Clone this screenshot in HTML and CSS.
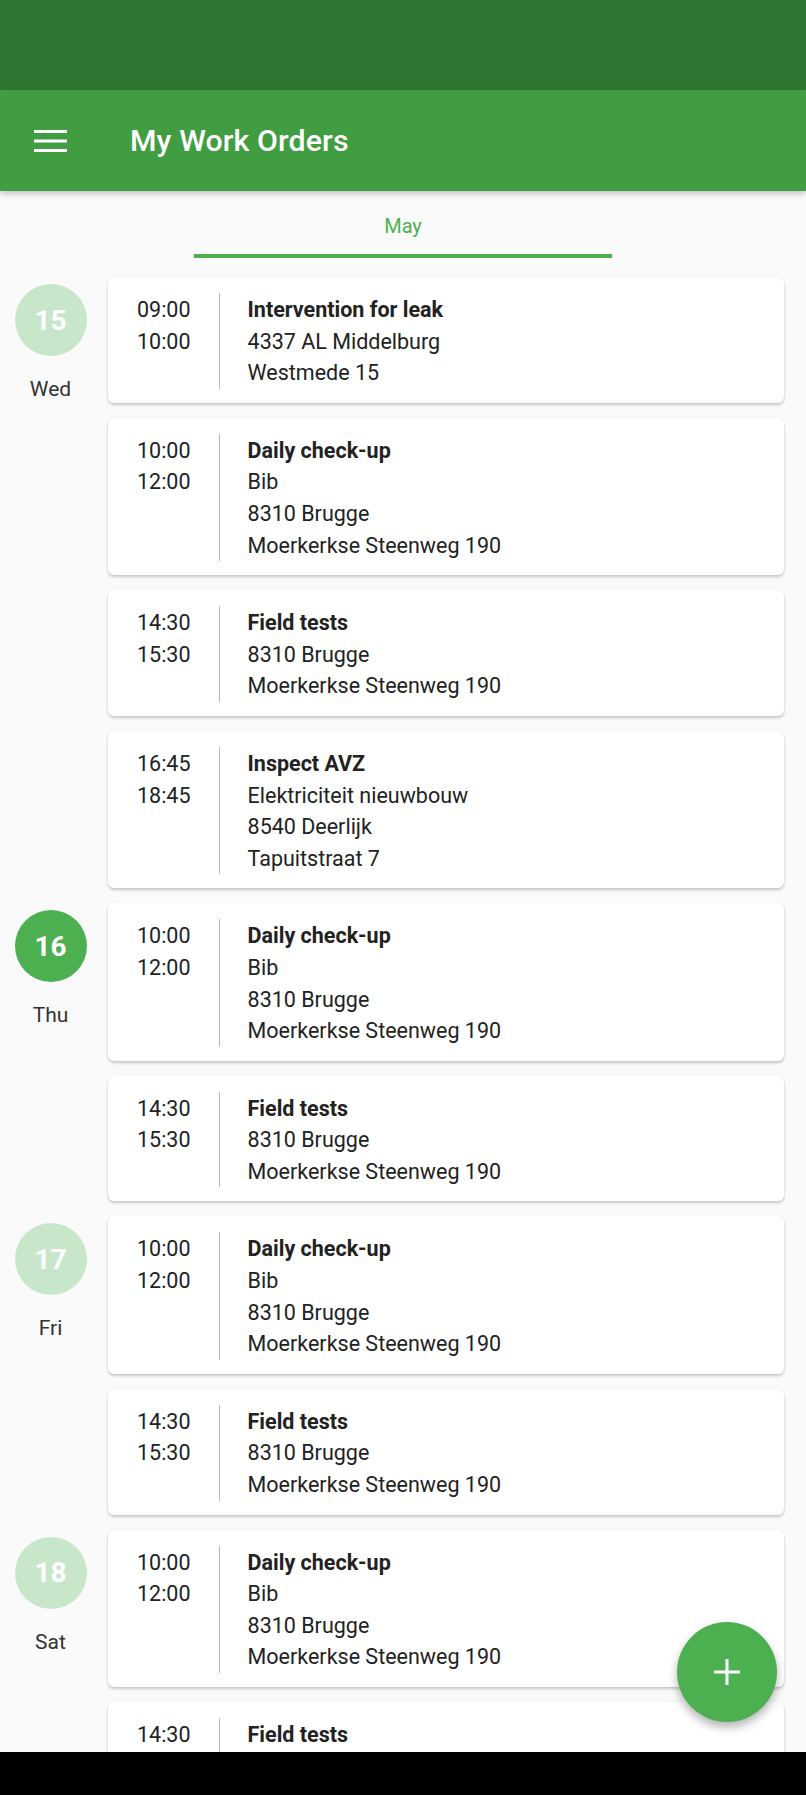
FILE: index.html
```html
<!DOCTYPE html>
<html lang="en">
<head>
<meta charset="utf-8">
<title>My Work Orders</title>
<link rel="stylesheet" href="styles.css">
</head>
<body>
<div class="screen">
  <div class="status"></div>
  <header class="appbar">
    <svg class="menu" width="33" height="22" viewBox="0 0 33 22">
      <rect x="0" y="0" width="33" height="3" fill="#fff"/>
      <rect x="0" y="9.5" width="33" height="3" fill="#fff"/>
      <rect x="0" y="19" width="33" height="3" fill="#fff"/>
    </svg>
    <h1 class="title">My Work Orders</h1>
  </header>
  <nav class="tabs">
    <div class="tab">May</div>
  </nav>
  <main class="list">
    <section class="day">
      <div class="date">
        <div class="circle light">15</div>
        <div class="weekday">Wed</div>
      </div>
      <div class="cards">
        <div class="card"><div class="time">09:00<br>10:00</div><div class="desc"><b>Intervention for leak</b><br>4337 AL Middelburg<br>Westmede 15</div></div>
        <div class="card"><div class="time">10:00<br>12:00</div><div class="desc"><b>Daily check-up</b><br>Bib<br>8310 Brugge<br>Moerkerkse Steenweg 190</div></div>
        <div class="card"><div class="time">14:30<br>15:30</div><div class="desc"><b>Field tests</b><br>8310 Brugge<br>Moerkerkse Steenweg 190</div></div>
        <div class="card"><div class="time">16:45<br>18:45</div><div class="desc"><b>Inspect AVZ</b><br>Elektriciteit nieuwbouw<br>8540 Deerlijk<br>Tapuitstraat 7</div></div>
      </div>
    </section>
    <section class="day">
      <div class="date">
        <div class="circle">16</div>
        <div class="weekday">Thu</div>
      </div>
      <div class="cards">
        <div class="card"><div class="time">10:00<br>12:00</div><div class="desc"><b>Daily check-up</b><br>Bib<br>8310 Brugge<br>Moerkerkse Steenweg 190</div></div>
        <div class="card"><div class="time">14:30<br>15:30</div><div class="desc"><b>Field tests</b><br>8310 Brugge<br>Moerkerkse Steenweg 190</div></div>
      </div>
    </section>
    <section class="day">
      <div class="date">
        <div class="circle light">17</div>
        <div class="weekday">Fri</div>
      </div>
      <div class="cards">
        <div class="card"><div class="time">10:00<br>12:00</div><div class="desc"><b>Daily check-up</b><br>Bib<br>8310 Brugge<br>Moerkerkse Steenweg 190</div></div>
        <div class="card"><div class="time">14:30<br>15:30</div><div class="desc"><b>Field tests</b><br>8310 Brugge<br>Moerkerkse Steenweg 190</div></div>
      </div>
    </section>
    <section class="day">
      <div class="date">
        <div class="circle light">18</div>
        <div class="weekday">Sat</div>
      </div>
      <div class="cards">
        <div class="card"><div class="time">10:00<br>12:00</div><div class="desc"><b>Daily check-up</b><br>Bib<br>8310 Brugge<br>Moerkerkse Steenweg 190</div></div>
        <div class="card"><div class="time">14:30<br>15:30</div><div class="desc"><b>Field tests</b><br>8310 Brugge<br>Moerkerkse Steenweg 190</div></div>
      </div>
    </section>
  </main>
  <button class="fab" aria-label="Add">
    <svg width="26" height="26" viewBox="0 0 26 26"><rect x="11.5" y="0" width="3" height="26" fill="#fff"/><rect x="0" y="11.5" width="26" height="3" fill="#fff"/></svg>
  </button>
  <div class="navbar"></div>
</div>
</body>
</html>
```

FILE: styles.css
```css
* { box-sizing: border-box; }
html, body { margin: 0; padding: 0; }
body {
  font-family: Roboto, "Liberation Sans", sans-serif;
  background: #fafafa;
  color: #212121;
}
.screen {
  position: relative;
  width: 806px;
  height: 1795px;
  overflow: hidden;
  background: #fafafa;
}
.status {
  height: 90px;
  background: #2e7632;
}
.appbar {
  position: relative;
  z-index: 2;
  height: 101px;
  background: #409d41;
  display: flex;
  align-items: center;
  box-shadow: 0 3px 6px rgba(0,0,0,0.22);
}
.menu {
  margin-left: 34px;
  flex: none;
}
.title {
  margin: 0 0 0 63px;
  font-size: 30.3px;
  font-weight: 500;
  color: #fff;
  letter-spacing: 0.1px;
}
.tabs {
  display: flex;
  justify-content: center;
  height: 67px;
}
.tab {
  width: 418px;
  padding-top: 23px;
  height: 67px;
  text-align: center;
  font-size: 20px;
  line-height: 24px;
  color: #4caf50;
  border-bottom: 4px solid #4caf50;
}
.list {
  padding: 19px 22px 0 0;
  display: flex;
  flex-direction: column;
  gap: 15px;
}
.day {
  display: grid;
  grid-template-columns: 101px 1fr;
  column-gap: 7px;
}
.date {
  display: flex;
  flex-direction: column;
  align-items: center;
}
.circle {
  margin-top: 7px;
  width: 72px;
  height: 72px;
  border-radius: 50%;
  background: #4caf50;
  color: #fff;
  font-size: 28px;
  font-weight: 700;
  display: flex;
  align-items: center;
  justify-content: center;
}
.circle.light {
  background: #c8e6c9;
}
.weekday {
  margin-top: 17px;
  font-size: 21px;
  line-height: 32px;
  color: #333;
}
.cards {
  display: flex;
  flex-direction: column;
  gap: 15px;
}
.card {
  background: #fff;
  border-radius: 6px;
  box-shadow: 0 2px 3px rgba(0,0,0,0.2), 0 0 2px rgba(0,0,0,0.06);
  display: flex;
  padding: 16px 0 14px;
  font-size: 21.5px;
  line-height: 31.6px;
}
.time {
  padding: 1px 28px 0 29px;
  color: #222;
}
.desc {
  padding: 1px 0 0 28px;
  border-left: 1px solid #b8b8b8;
  color: #222;
}
.desc b {
  font-weight: 700;
}
.fab {
  position: absolute;
  left: 677px;
  top: 1622px;
  width: 100px;
  height: 100px;
  border-radius: 50%;
  border: none;
  background: #4caf50;
  box-shadow: 0 5px 10px rgba(0,0,0,0.3);
  display: flex;
  align-items: center;
  justify-content: center;
  padding: 0;
  z-index: 3;
}
.navbar {
  position: absolute;
  left: 0;
  right: 0;
  bottom: 0;
  height: 43px;
  background: #000;
  z-index: 4;
}
```
